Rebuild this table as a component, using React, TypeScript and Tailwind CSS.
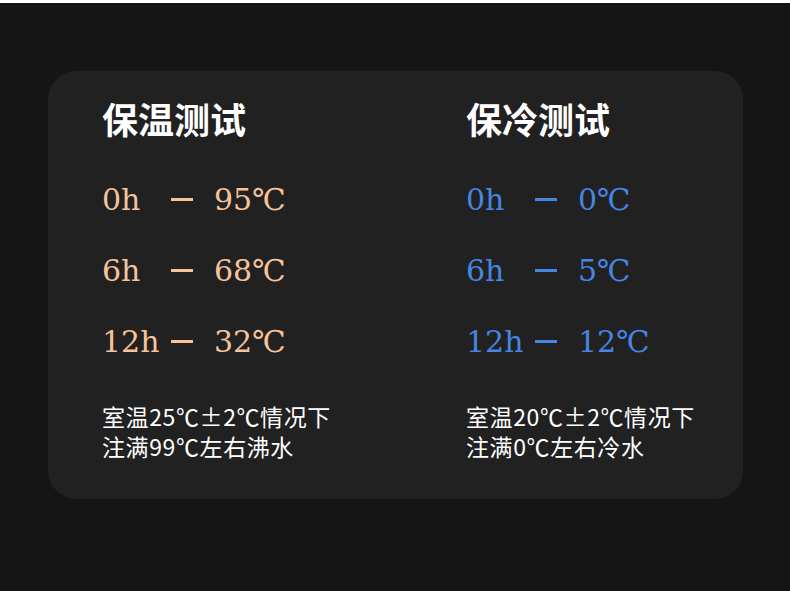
const cjk = '"Noto Sans CJK SC", "Noto Sans", sans-serif'
const serif = '"DejaVu Serif", "Noto Sans CJK SC", serif'

type Row = { hour: string; temp: string }

const hot: Row[] = [
  { hour: '0h', temp: '95℃' },
  { hour: '6h', temp: '68℃' },
  { hour: '12h', temp: '32℃' },
]

const cold: Row[] = [
  { hour: '0h', temp: '0℃' },
  { hour: '6h', temp: '5℃' },
  { hour: '12h', temp: '12℃' },
]

function Column({
  title,
  rows,
  text,
  dash,
  notes,
}: {
  title: string
  rows: Row[]
  text: string
  dash: string
  notes: string[]
}) {
  return (
    <div className="flex flex-col">
      <h2
        className="h-[36px] text-[36px] leading-[36px] font-bold text-white"
        style={{ fontFamily: cjk }}
      >
        {title}
      </h2>
      <div className="mt-[28px] flex flex-col">
        {rows.map((r) => (
          <div key={r.hour} className={`flex h-[71px] items-center ${text}`}>
            <span
              className="w-[69px] text-[30px] leading-none"
              style={{ fontFamily: serif }}
            >
              {r.hour}
            </span>
            <span className={`h-[3px] w-[22px] ${dash}`} />
            <span
              className="ml-[21px] text-[30px] leading-none"
              style={{ fontFamily: serif }}
            >
              {r.temp}
            </span>
          </div>
        ))}
      </div>
      <div
        className="mt-[24px] text-[23px] leading-[30px] tracking-[0.6px] text-white"
        style={{ fontFamily: cjk }}
      >
        {notes.map((n) => (
          <p key={n}>{n}</p>
        ))}
      </div>
    </div>
  )
}

export default function App() {
  return (
    <div className="flex h-[591px] w-[790px] flex-col bg-[#151515]">
      <div className="h-[3px] bg-white" />
      <div className="ml-[48px] mt-[68px] h-[428px] w-[695px] rounded-[28px] bg-[#212121] pl-[54px] pt-[29px]">
        <div className="grid grid-cols-[364px_1fr]">
          <Column
            title="保温测试"
            rows={hot}
            text="text-[#f6c39b]"
            dash="bg-[#f6c39b]"
            notes={['室温25℃±2℃情况下', '注满99℃左右沸水']}
          />
          <Column
            title="保冷测试"
            rows={cold}
            text="text-[#4586e3]"
            dash="bg-[#4586e3]"
            notes={['室温20℃±2℃情况下', '注满0℃左右冷水']}
          />
        </div>
      </div>
    </div>
  )
}
